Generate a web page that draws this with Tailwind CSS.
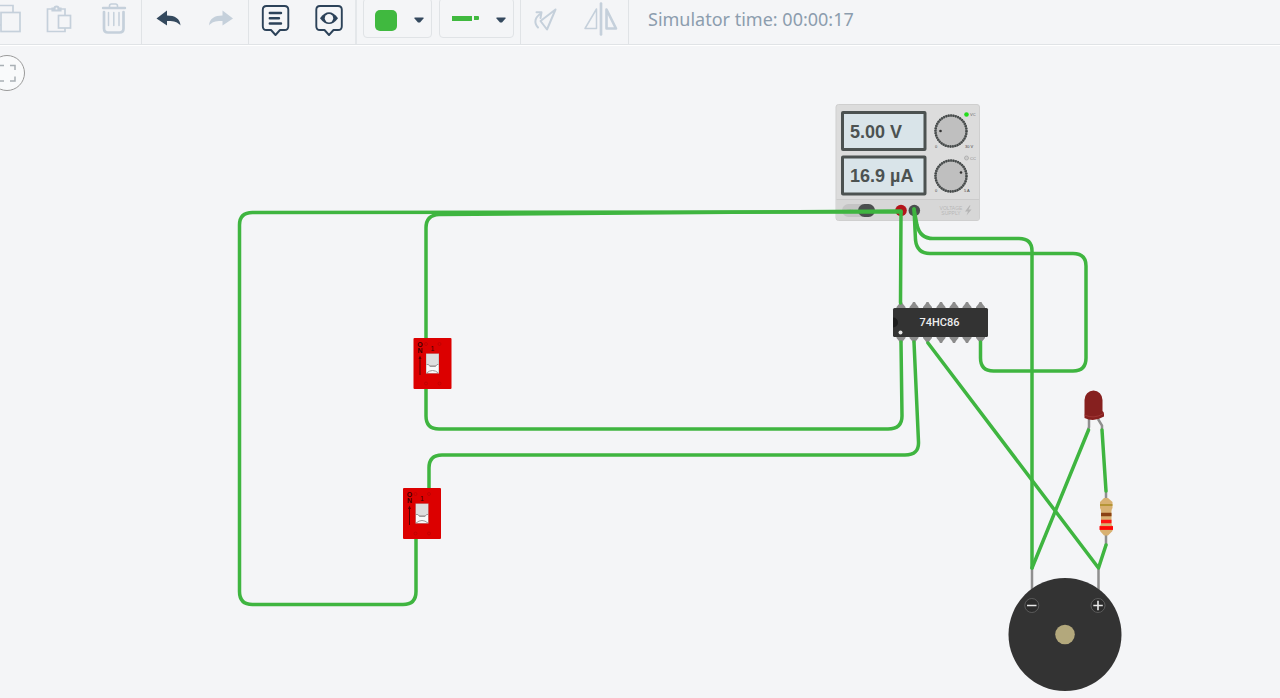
<!DOCTYPE html>
<html lang="en">

<head>
    <meta charset="UTF-8">
    <meta name="viewport" content="width=device-width, initial-scale=1.0">
    <title>Circuit simulator</title>
    <script src="https://cdn.jsdelivr.net/npm/@tailwindcss/browser@4"></script>
</head>

<body class="flex flex-col h-screen overflow-hidden bg-[#f4f5f7] font-['Noto_Sans',sans-serif]">
    <header class="flex shrink-0 h-[45px] border-b border-[#e0e3e6] overflow-hidden">
        <div class="flex border-r border-[#e0e3e6] text-[#c5d0db]">
            <button class="w-[54px] -ml-[21px]" aria-label="Copy">
                <svg class="w-[54px] h-11" viewBox="-21 0 54 44" fill="none" stroke="currentColor" stroke-width="1.700">
                    <path d="M1 25H-6V5.500H13V12" />
                    <rect x="1" y="12.500" width="19" height="19" />
                </svg>
            </button>
            <button class="w-[54px]" aria-label="Paste">
                <svg class="w-[54px] h-11" viewBox="33 0 54 44" fill="none" stroke="currentColor" stroke-width="1.700">
                    <path d="M52 9H47.500V31.500H65V28M65 15V9H61" />
                    <rect x="58.500" y="15.500" width="12" height="12.500" />
                    <path d="M52.500 10.500V8.500H54.500A2 2 0 0 1 58.500 8.500H60.500V10.500Z" stroke-width="2.200" />
                </svg>
            </button>
            <button class="w-[54px]" aria-label="Delete">
                <svg class="w-[54px] h-11" viewBox="87 0 54 44" fill="none" stroke="currentColor" stroke-linecap="round">
                    <path d="M109.500 7V6Q109.500 4 111.500 4H115.500Q117.500 4 117.500 6V7" stroke-width="1.600" />
                    <path d="M103 8H125" stroke-width="2.400" />
                    <path d="M104 12V28.500Q104 32.500 108 32.500H119.500Q123.500 32.500 123.500 28.500V12" stroke-width="2.700" />
                    <path d="M108.500 12.500V25.500M113.800 12.500V25.500M119 12.500V25.500" stroke-width="1.500" />
                </svg>
            </button>
        </div>
        <div class="flex border-r border-[#e0e3e6]">
            <button class="w-[53px] text-[#34495e]" aria-label="Undo">
                <svg class="w-[53px] h-11" viewBox="142 0 53 44" fill="currentColor">
                    <path d="M156.500 18.500L167 10.500V15.500C175 15.500 180 18.500 180.500 25.500C177.500 21.800 173.500 20.800 167 21V25.500Z" />
                </svg>
            </button>
            <button class="w-[53px] text-[#c5d0db]" aria-label="Redo">
                <svg class="w-[53px] h-11" viewBox="195 0 53 44" fill="currentColor">
                    <path d="M233 18.500L222.500 10.500V15.500C214.500 15.500 209.500 18.500 209 25.500C212 21.800 216 20.800 222.500 21V25.500Z" />
                </svg>
            </button>
        </div>
        <div class="flex border-r-2 border-[#e4e7ea] text-[#2c4259]">
            <button class="w-[53px]" aria-label="Notes">
                <svg class="w-[53px] h-11" viewBox="249 0 53 44" fill="none" stroke="currentColor" stroke-linejoin="round" stroke-linecap="round">
                    <path d="M266.500 6H284.500Q288.300 6 288.300 9.800V26.200Q288.300 30 284.500 30H280L275.500 35L271 30H266.500Q262.800 30 262.800 26.200V9.800Q262.800 6 266.500 6Z" stroke-width="1.900" />
                    <path d="M269.800 13H281M269.800 18.200H279M269.800 23.500H281" stroke-width="2.400" />
                </svg>
            </button>
            <button class="w-[53px]" aria-label="Toggle notes">
                <svg class="w-[53px] h-11" viewBox="302 0 53 44" fill="none" stroke="currentColor" stroke-linejoin="round">
                    <path d="M320 6H338Q341.800 6 341.800 9.800V26.200Q341.800 30 338 30H333.500L329 35L324.500 30H320Q316.300 30 316.300 26.200V9.800Q316.300 6 320 6Z" stroke-width="1.900" />
                    <path d="M320 18.200Q329 6.500 338 18.200Q329 30 320 18.200Z" fill="currentColor" stroke="none" />
                    <circle cx="329" cy="18.200" r="4.200" fill="#f4f5f7" stroke="none" />
                </svg>
            </button>
        </div>
        <div class="flex gap-[7px] px-1.5 border-r border-[#e0e3e6]">
            <label class="relative flex items-center justify-between w-[69px] h-10 -mt-0.5 pl-[11px] pr-[7px] border border-[#e0e3e6] rounded">
                <span class="w-[22px] h-[21px] mt-1 rounded-[5px] bg-[#40b93f]"></span>
                <svg class="w-2.5 h-1.5 mt-1" viewBox="0 0 10 6" fill="#34495e"><path d="M.5 .5H9.500V1.500L6 5.500H4L.5 1.500Z" /></svg>
                <select class="absolute inset-0 opacity-0" aria-label="Wire color">
                    <option>Green</option>
                    <option>Red</option>
                    <option>Black</option>
                </select>
            </label>
            <label class="relative flex items-center justify-between w-[75px] h-10 -mt-0.5 pl-[12px] pr-[7px] border border-[#e0e3e6] rounded">
                <span class="flex gap-[2px]">
                    <span class="w-5 h-[5px] bg-[#40b93f]"></span>
                    <span class="w-[5px] h-1 bg-[#40b93f] rounded-r-[1px]"></span>
                </span>
                <svg class="w-2.5 h-1.5 mt-1" viewBox="0 0 10 6" fill="#34495e"><path d="M.5 .5H9.500V1.500L6 5.500H4L.5 1.500Z" /></svg>
                <select class="absolute inset-0 opacity-0" aria-label="Wire type">
                    <option>Normal</option>
                    <option>Hookup</option>
                </select>
            </label>
        </div>
        <div class="flex border-r border-[#e0e3e6] text-[#c5d0db]">
            <button class="w-[53px]" aria-label="Rotate">
                <svg class="w-[53px] h-11" viewBox="521 0 53 44" fill="none" stroke="currentColor" stroke-width="2" stroke-linejoin="round" stroke-linecap="round">
                    <path d="M555.500 9.500L540.500 21L547 29.500Z" />
                    <path d="M538 27.500C533.500 22.500 535 17 541 13.500M536.500 12.300H541.500L540.500 18" />
                </svg>
            </button>
            <button class="w-[54px]" aria-label="Mirror">
                <svg class="w-[54px] h-11" viewBox="574 0 54 44" fill="none" stroke="currentColor" stroke-linejoin="round">
                    <path d="M596.500 9V28.500H585Z" stroke-width="1.500" />
                    <path d="M601 3.500V34.500" stroke-width="2.700" stroke-linecap="round" />
                    <path d="M606.500 9.500V28.500H616Z" stroke-width="2.600" />
                </svg>
            </button>
        </div>
        <p class="ml-[19px] mt-[5px] text-[18px] leading-7 whitespace-nowrap text-[#8c9dae]">Simulator time: 00:00:17</p>
    </header>

    <main class="relative flex-1 min-h-0 border-t border-white">
        <svg class="w-full h-full" viewBox="0 46 1280 652" font-family="Liberation Sans, sans-serif">
            <defs>
                <g id="knob">
                    <circle r="15.500" fill="#bfbfbf" stroke="#6a6e6e" stroke-width="2" />
                    <circle r="15.500" fill="none" stroke="#424646" stroke-width="2.400" stroke-dasharray="1.300 1.100" />
                </g>
                <g id="dip">
                    <rect width="38" height="51" rx="1" fill="#dc0000" />
                    <rect x="12.500" y="15.500" width="13" height="20" fill="#b9b0b0" />
                    <rect x="13" y="16" width="12" height="11" fill="#dedede" />
                    <path d="M13 26.500H15L16.500 28.500H22L23.500 26.500H25V35H13Z" fill="#fafafa" />
                    <path d="M13 26.500H15L16.500 28.500H22L23.500 26.500H25M13 35Q16 32.500 19 32.500Q22 32.500 25 35" fill="none" stroke="#9a9a9a" />
                    <g fill="none" stroke="#b80000" stroke-width=".7">
                        <circle cx="12.500" cy="6" r="1.500" /><circle cx="26" cy="6" r="1.500" />
                        <circle cx="12.500" cy="45.500" r="1.500" /><circle cx="26" cy="45.500" r="1.500" />
                    </g>
                    <path d="M6.500 37V19" stroke="#5a0000" stroke-width="1" />
                    <path d="M5 21L6.500 17.500L8 21Z" fill="#5a0000" />
                    <g fill="#3d0000" font-size="7" font-weight="bold" text-anchor="middle">
                        <text x="6.500" y="9">O</text>
                        <text x="6.500" y="15">N</text>
                        <text x="19" y="13" font-weight="normal">1</text>
                    </g>
                </g>
                <path id="pins" d="M-4.500 0V-1L-2 -4L-1 -6H1L2 -4L4.500 -1V0Z" />
            </defs>

            <!-- power supply -->
            <rect x="836" y="104.500" width="143.500" height="116" rx="2.500" fill="#dcdcdc" stroke="#cfcfcf" />
            <path d="M836.500 200H979V218Q979 220 977 220H838.500Q836.500 220 836.500 218Z" fill="#d7d7d7" />
            <path d="M836.500 199.500H979" stroke="#cbcbcb" />
            <g fill="#d9e4e9" stroke="#4c5251" stroke-width="3">
                <rect x="842.500" y="112.500" width="82.500" height="37" rx=".5" />
                <rect x="842.500" y="157" width="82.500" height="37" rx=".5" />
            </g>
            <g fill="#4c5251" font-size="18" font-weight="bold">
                <text x="850" y="138">5.00 V</text>
                <text x="850" y="181.500">16.9 µA</text>
            </g>
            <use href="#knob" x="951" y="131" />
            <use href="#knob" x="951" y="176" />
            <circle cx="940.500" cy="131" r="1.300" fill="#333" />
            <circle cx="961" cy="172.500" r="1.300" fill="#333" />
            <circle cx="966.500" cy="114.500" r="2.300" fill="#22dd1b" />
            <circle cx="966.500" cy="158" r="2" fill="#ccc" stroke="#aaa" stroke-width=".8" />
            <g font-size="4" fill="#444">
                <text x="935" y="147.500">0</text>
                <text x="965" y="147.500">30 V</text>
                <text x="935" y="192">0</text>
                <text x="964" y="192">5 A</text>
                <text x="970" y="116" fill="#666">VC</text>
                <text x="970" y="159.500" fill="#888">CC</text>
            </g>
            <rect x="842" y="204" width="33" height="13" rx="6.500" fill="#c4c4c4" />
            <text x="847" y="212" font-size="4" fill="#aaa">ON</text>
            <rect x="858" y="204" width="17" height="13" rx="6.500" fill="#4b4f4f" />
            <g font-size="5" fill="#b8b8b8" text-anchor="middle">
                <text x="951" y="210">VOLTAGE</text>
                <text x="951" y="215">SUPPLY</text>
            </g>
            <path d="M969.500 205.500L965 211.500H968L966.500 215.500L971.500 209.500H968.500L970.500 205.500Z" fill="#b5b5b5" />
            <circle cx="901" cy="210.500" r="5.800" fill="#b3151a" />
            <circle cx="914.300" cy="210.500" r="5.800" fill="#4b4f4f" />

            <!-- component leads -->
            <g fill="none" stroke="#8f8f8f" stroke-width="2.500">
                <path d="M1032 569V592M1098.500 569V592M1106 491V500M1106 533V546" />
                <path d="M1089 418V427L1088 430M1098 419L1102 425.500V430" />
            </g>

            <g fill="#8c8c8c">
                <use href="#pins" x="901" y="308" /><use href="#pins" x="914" y="308" /><use href="#pins" x="927.500" y="308" />
                <use href="#pins" x="941" y="308" /><use href="#pins" x="954" y="308" /><use href="#pins" x="967" y="308" />
                <use href="#pins" x="980.500" y="308" />
                <g transform="matrix(1 0 0 -1 0 645)">
                    <use href="#pins" x="901" y="308" /><use href="#pins" x="914" y="308" /><use href="#pins" x="927.500" y="308" />
                    <use href="#pins" x="941" y="308" /><use href="#pins" x="954" y="308" /><use href="#pins" x="967" y="308" />
                    <use href="#pins" x="980.500" y="308" />
                </g>
            </g>

            <!-- wires -->
            <g fill="none" stroke="#3fb540" stroke-width="3.500" stroke-linecap="round" stroke-linejoin="round">
                <path d="M901 212L252.500 212.500Q239.500 212.500 239.500 225V591.500Q239.500 604.500 252.500 604.500H403Q416 604.500 416 591.500V539" />
                <path d="M901 211L439 214.500Q426 215 426 228V338" />
                <path d="M426 389V416Q426 429 439 429H888Q902 429 902 416L901 342" />
                <path d="M429 488V468Q429 455 442 455H905Q919 455 918.500 442L914 342" />
                <path d="M901 212L900.500 303" />
                <path d="M914 209L917 225Q920 238.500 933 238.500H1019Q1032 238.500 1032 251V568" />
                <path d="M914 209L915.500 240Q917 253.500 930 253.500H1073Q1086 253.500 1086 266V358Q1086 371 1073 371H993.500Q980.500 371 980.500 358V342" />
                <path d="M928 343L1098.500 568L1106 545" />
                <path d="M1088.500 430L1032 568" />
                <path d="M1102 430L1106 491" />
            </g>

            <!-- logic chip -->
            <rect x="893" y="308" width="95" height="29" rx="1.500" fill="#333" />
            <path d="M893 317.500A5 5 0 0 1 893 327.500Z" fill="#1c1c1c" />
            <circle cx="900.500" cy="332.500" r="2" fill="#e6e6e6" />
            <text x="939.500" y="326" font-family="Roboto, sans-serif" font-size="11" font-weight="500" text-anchor="middle" fill="#eee">74HC86</text>

            <use href="#dip" x="413.500" y="338" />
            <use href="#dip" x="403" y="488" />

            <!-- led -->
            <path d="M1084.500 400A9 9.500 0 0 1 1102.500 400V411Q1104 412 1104 414V416.500Q1094 422.500 1084.500 418Z" fill="#86201f" />
            <path d="M1084.500 415Q1094 419.500 1103.500 413.500" fill="none" stroke="#a53a38" stroke-width=".8" />

            <!-- resistor -->
            <path d="M1104 498H1108L1112.500 502V508Q1111 510 1111.500 514V521Q1111 524 1112.500 526V531L1108 535.500H1104L1100 531V526Q1101.500 524 1101 521V514Q1101.500 510 1100 508V502Z" fill="#d8b172" />
            <path d="M1100 505H1112.500" stroke="#aa8d23" stroke-width="1.500" />
            <path d="M1101 514.500H1111.500" stroke="#8a4214" stroke-width="3.500" />
            <path d="M1101 521.500H1111.500" stroke="#ff1414" stroke-width="3.500" />
            <path d="M1099.500 528H1113" stroke="#ff0808" stroke-width="3.800" />

            <!-- buzzer -->
            <circle cx="1065" cy="634.500" r="56.500" fill="#333" />
            <circle cx="1065" cy="634.500" r="9.800" fill="#b3a87c" />
            <g fill="#2b2b2b" stroke="#666" stroke-width=".8">
                <circle cx="1031.800" cy="605.500" r="7" />
                <circle cx="1098" cy="605.500" r="7" />
            </g>
            <path d="M1027 605.500H1036.500M1093.300 605.500H1102.800M1098 600.800V610.200" stroke="#e8e8e8" stroke-width="1.600" />
        </svg>

        <button class="absolute top-[9px] -left-[11px] w-9 h-9 rounded-full border border-[#9a9a9a] bg-[#f9fafb]" aria-label="Zoom to fit">
            <svg class="w-[34px] h-[34px]" viewBox="0 0 34 34" fill="none" stroke="#a9b0b5" stroke-width="1.500">
                <path d="M9 14V9.500H14M20 9.500H25V14M25 20.500V25H20M14 25H9V20.500" />
            </svg>
        </button>
    </main>
</body>

</html>
